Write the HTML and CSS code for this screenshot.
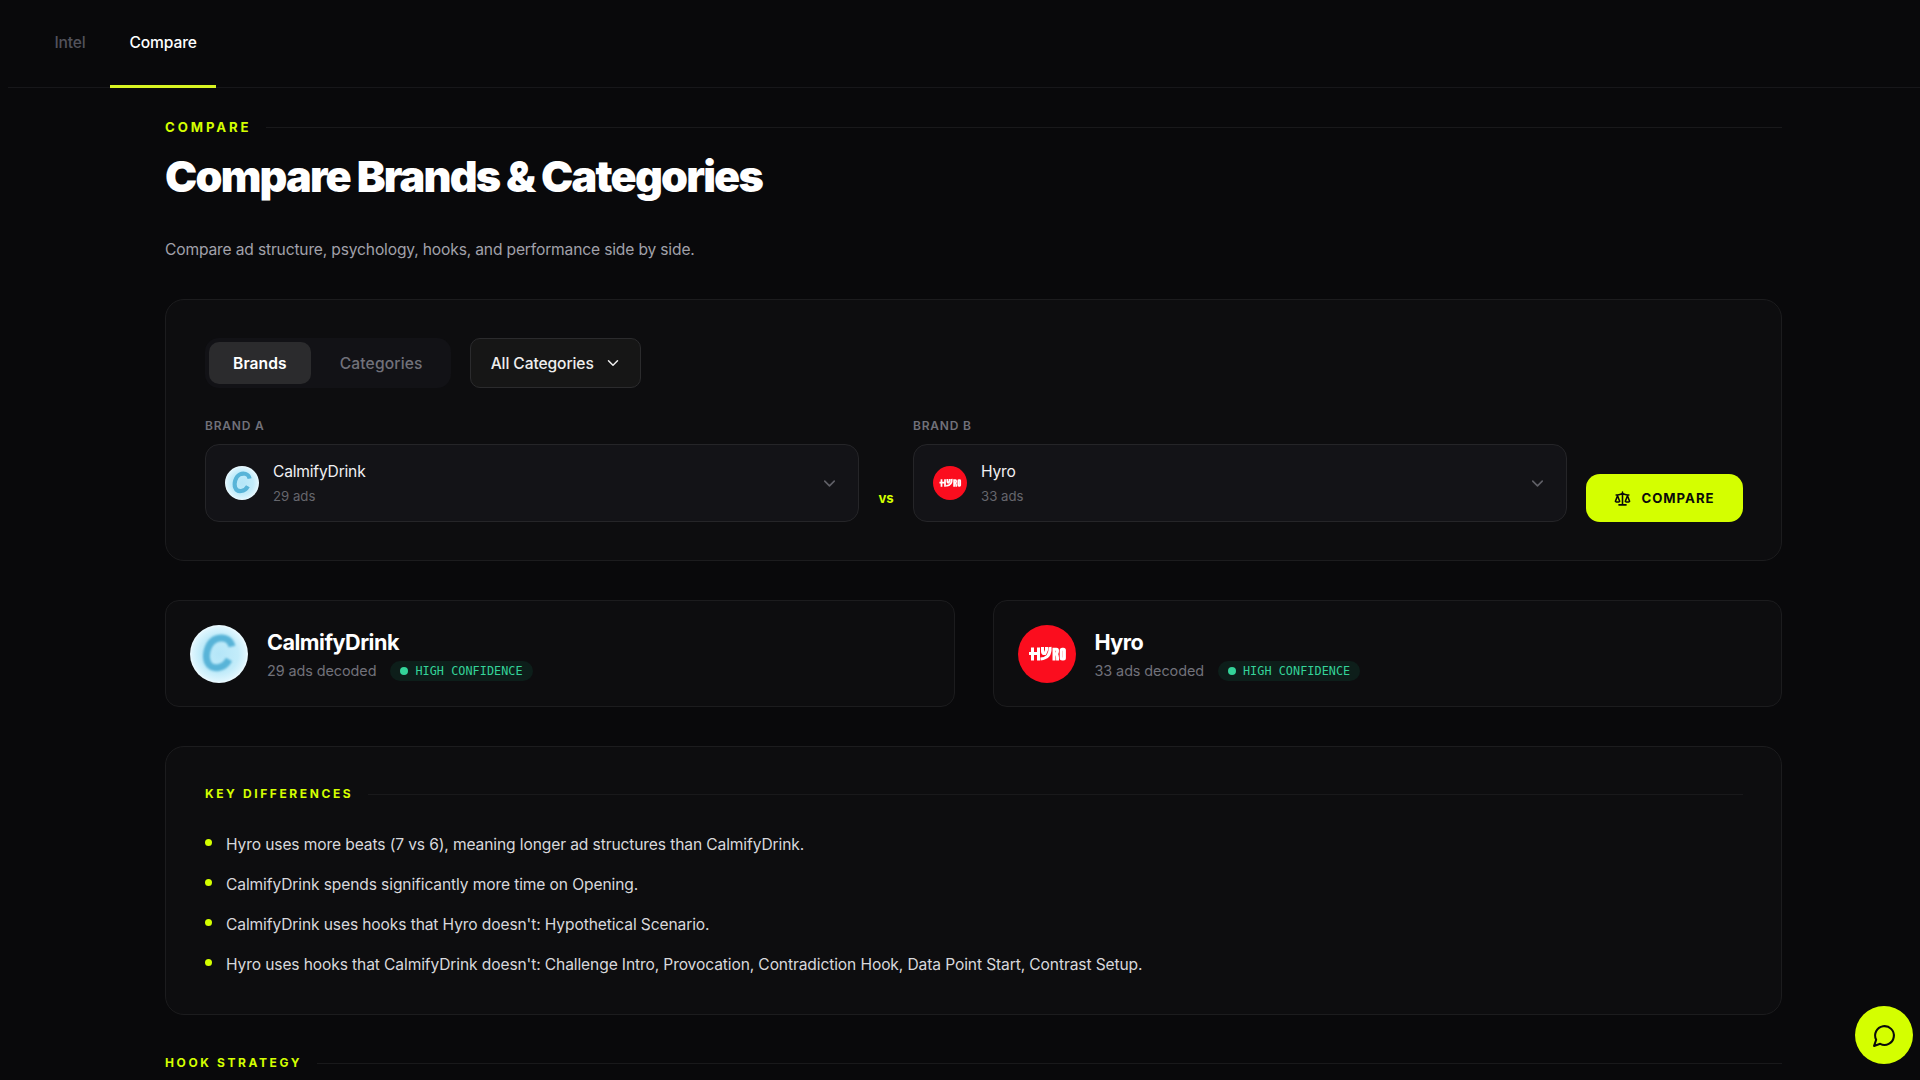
FILE: index.html
```html
<!DOCTYPE html>
<html lang="en">

<head>
    <meta charset="UTF-8">
    <meta name="viewport" content="width=device-width, initial-scale=1.0">
    <title>Compare Brands &amp; Categories</title>
    <link rel="stylesheet" href="styles.css">
</head>

<body>
    <!-- shared logos and icons -->
    <svg class="defs" width="0" height="0">
        <defs>
            <radialGradient id="calm-bg">
                <stop offset="0" stop-color="#b4e6f8" />
                <stop offset="0.7" stop-color="#c3ecfa" />
                <stop offset="1" stop-color="#e0f6fe" />
            </radialGradient>
            <filter id="soft" x="-20%" y="-20%" width="140%" height="140%">
                <feGaussianBlur stdDeviation="1" />
            </filter>
        </defs>
        <symbol id="calm" viewBox="0 0 58 58">
            <circle cx="29" cy="29" r="29" fill="#e9f9ff" />
            <circle cx="29" cy="29" r="27.5" fill="url(#calm-bg)" />
            <path d="M42 21.5C40 12.500 31 11.500 25 14.5C18 18 14.500 30 17.500 37C21 46 34 44 39 34.500" fill="none" stroke="#58b4d8" stroke-width="7" filter="url(#soft)" />
        </symbol>
        <symbol id="hyro" viewBox="0 0 58 58">
            <circle cx="29" cy="29" r="29" fill="#fb0d1e" />
            <g fill="none" stroke="#fff" stroke-width="3">
                <path d="M14.5 22.5V35.5M20.5 22.5V35.5M11 28.5H20" />
                <path d="M24.5 22V26.5Q24.5 29 27 28.5L28.5 25V22M32 22Q33 33 22.5 34" />
                <path d="M36 35.5V24.2H38.5Q39.5 24.2 39.5 26T38.5 29H36M38.5 29Q39.6 30 39.6 35.5" />
                <rect x="43.2" y="24.2" width="3.2" height="9.8" rx="1" />
            </g>
        </symbol>
        <symbol id="chevron" viewBox="0 0 24 24">
            <path d="m6 9 6 6 6-6" fill="none" stroke="currentColor" stroke-width="2" stroke-linecap="round" stroke-linejoin="round" />
        </symbol>
    </svg>

    <nav class="tabs">
        <a class="tab" href="#">Intel</a>
        <a class="tab active" href="#">Compare</a>
    </nav>

    <main>
        <div class="eyebrow">Compare</div>
        <h1>Compare Brands &amp; Categories</h1>
        <p class="subtitle">Compare ad structure, psychology, hooks, and performance side by side.</p>

        <section class="card picker">
            <div class="filters">
                <div class="toggle">
                    <button class="on">Brands</button>
                    <button>Categories</button>
                </div>
                <button class="category">All Categories <svg><use href="#chevron" /></svg></button>
            </div>
            <div class="row">
                <div class="field">
                    <label>Brand A</label>
                    <div class="select">
                        <svg class="avatar"><use href="#calm" /></svg>
                        <div>
                            <div class="name">CalmifyDrink</div>
                            <div class="count">29 ads</div>
                        </div>
                        <svg class="arrow"><use href="#chevron" /></svg>
                    </div>
                </div>
                <span class="vs">vs</span>
                <div class="field">
                    <label>Brand B</label>
                    <div class="select">
                        <svg class="avatar"><use href="#hyro" /></svg>
                        <div>
                            <div class="name">Hyro</div>
                            <div class="count">33 ads</div>
                        </div>
                        <svg class="arrow"><use href="#chevron" /></svg>
                    </div>
                </div>
                <button class="compare">
                    <svg viewBox="0 0 24 24" fill="none" stroke="currentColor" stroke-width="2.2" stroke-linecap="round" stroke-linejoin="round">
                        <path d="m16 16 3-8 3 8c-.87.65-1.92 1-3 1s-2.13-.35-3-1Z" />
                        <path d="m2 16 3-8 3 8c-.87.65-1.92 1-3 1s-2.13-.35-3-1Z" />
                        <path d="M7 21h10M12 3v18M3 7h2c2 0 5-1 7-2 2 1 5 2 7 2h2" />
                    </svg>
                    Compare
                </button>
            </div>
        </section>

        <div class="brands">
            <div class="brand">
                <svg class="logo"><use href="#calm" /></svg>
                <div>
                    <h2>CalmifyDrink</h2>
                    <div class="meta">29 ads decoded <span class="badge">HIGH CONFIDENCE</span></div>
                </div>
            </div>
            <div class="brand">
                <svg class="logo"><use href="#hyro" /></svg>
                <div>
                    <h2>Hyro</h2>
                    <div class="meta">33 ads decoded <span class="badge">HIGH CONFIDENCE</span></div>
                </div>
            </div>
        </div>

        <section class="card differences">
            <div class="eyebrow small">Key Differences</div>
            <ul>
                <li>Hyro uses more beats (7 vs 6), meaning longer ad structures than CalmifyDrink.</li>
                <li>CalmifyDrink spends significantly more time on Opening.</li>
                <li>CalmifyDrink uses hooks that Hyro doesn't: Hypothetical Scenario.</li>
                <li>Hyro uses hooks that CalmifyDrink doesn't: Challenge Intro, Provocation, Contradiction Hook, Data Point Start, Contrast Setup.</li>
            </ul>
        </section>

        <div class="eyebrow small">Hook Strategy</div>
    </main>

    <button class="chat">
        <svg viewBox="0 0 24 24" fill="none" stroke="currentColor" stroke-width="2" stroke-linecap="round" stroke-linejoin="round">
            <path d="M7.9 20A9 9 0 1 0 4 16.1L2 22Z" />
        </svg>
    </button>
</body>

</html>
```
FILE: styles.css
```css
* {
    box-sizing: border-box;
}

body {
    margin: 0;
    height: 1080px;
    overflow: hidden;
    background-color: #09090b;
    color: #fff;
    font-family: Inter, "Liberation Sans", sans-serif;
    font-size: 15.6px;
    letter-spacing: -0.12px;
}

button {
    border: none;
    background: none;
    color: inherit;
    font: inherit;
    padding: 0;
    cursor: pointer;
}

.defs {
    position: absolute;
}

/* top navigation */
.tabs {
    display: flex;
    gap: 5px;
    height: 88px;
    margin-left: 8px;
    padding-left: 27px;
    border-bottom: 1px solid #17171a;
}

.tab {
    height: 88px;
    padding: 0 19.4px;
    line-height: 85px;
    color: #52525b;
    font-weight: 500;
    text-decoration: none;
    border-bottom: 3px solid transparent;
}

.tab.active {
    color: #fff;
    border-bottom-color: #d9f522;
}

main {
    width: 1617px;
    margin-left: 165px;
    padding-top: 29px;
}

.eyebrow {
    display: flex;
    align-items: center;
    gap: 15px;
    line-height: 20px;
    font-size: 13.2px;
    font-weight: 700;
    letter-spacing: 2.9px;
    text-transform: uppercase;
    color: #d4ff00;
}

.eyebrow::after {
    content: "";
    flex: 1;
    height: 1px;
    background-color: #19191b;
}

.eyebrow.small {
    font-size: 12px;
    letter-spacing: 2.6px;
}

h1 {
    margin: 13px 0 35px;
    font-size: 43.2px;
    line-height: 52px;
    font-weight: 900;
    letter-spacing: -1.82px;
}

.subtitle {
    margin: 0 0 36px;
    line-height: 26px;
    letter-spacing: -0.16px;
    color: #a1a1aa;
}

.card {
    background-color: #0d0d0f;
    border: 1px solid #1c1c1e;
    border-radius: 19px;
    padding: 38px 38px 38px 39px;
}

.picker {
    height: 262px;
}

/* filters */
.filters {
    display: flex;
    gap: 19px;
}

.toggle {
    display: flex;
    gap: 5px;
    padding: 4px;
    height: 50px;
    border-radius: 14px;
    background-color: #121216;
}

.toggle button {
    padding: 0 24px;
    border-radius: 10px;
    font-weight: 500;
    letter-spacing: 0.15px;
    color: #71717a;
}

.toggle .on {
    background-color: #2b2b2d;
    color: #fff;
    font-weight: 600;
    letter-spacing: 0.1px;
}

.category {
    display: flex;
    align-items: center;
    gap: 10px;
    width: 171px;
    height: 50px;
    padding: 0 20px;
    border: 1px solid #2b2b2d;
    border-radius: 10px;
    background-color: #161616;
    color: #eee;
    font-weight: 500;
    letter-spacing: -0.1px;
    white-space: nowrap;
}

.category svg {
    width: 18px;
    height: 18px;
    flex: none;
}

/* brand pickers */
.row {
    display: flex;
    align-items: flex-end;
    gap: 19px;
    margin-top: 28px;
}

.field {
    flex: 1;
}

.field label {
    display: block;
    line-height: 20px;
    margin-bottom: 8px;
    font-size: 12px;
    font-weight: 600;
    letter-spacing: 0.8px;
    text-transform: uppercase;
    color: #71717a;
}

.select {
    display: flex;
    align-items: center;
    gap: 14px;
    height: 78px;
    padding: 0 19px;
    border: 1px solid #252528;
    border-radius: 14px;
    background-color: #131317;
}

.avatar {
    width: 34px;
    height: 34px;
}

.name {
    padding-top: 1px;
    line-height: 24px;
    letter-spacing: -0.2px;
    color: #f0f0f2;
}

.count {
    line-height: 24px;
    font-size: 13.2px;
    letter-spacing: 0;
    color: #66666d;
}

.arrow {
    width: 19px;
    height: 19px;
    margin-left: auto;
    color: #606067;
}

.vs {
    width: 16px;
    line-height: 48px;
    font-size: 13.2px;
    font-weight: 700;
    text-align: center;
    color: #d4ff00;
}

.compare {
    display: flex;
    align-items: center;
    justify-content: center;
    gap: 10px;
    width: 157px;
    height: 48px;
    border-radius: 14px;
    background-color: #d4ff00;
    color: #0a0a0a;
    font-size: 13.2px;
    font-weight: 700;
    letter-spacing: 1px;
    text-transform: uppercase;
}

.compare svg {
    width: 17px;
    height: 17px;
}

/* brand summary */
.brands {
    display: grid;
    grid-template-columns: 1fr 1fr;
    gap: 38px;
    margin: 39px 0;
}

.brand {
    display: flex;
    align-items: center;
    gap: 19px;
    height: 107px;
    padding: 0 24px;
    background-color: #0d0d0f;
    border: 1px solid #1c1c1e;
    border-radius: 14px;
}

.logo {
    width: 58px;
    height: 58px;
}

h2 {
    margin: 3px 0 0;
    font-size: 21.6px;
    line-height: 32px;
    font-weight: 700;
    letter-spacing: -0.5px;
}

.meta {
    display: flex;
    align-items: center;
    gap: 14px;
    line-height: 26px;
    font-size: 14.4px;
    letter-spacing: -0.07px;
    color: #71717a;
}

.badge {
    display: flex;
    align-items: center;
    gap: 7px;
    height: 20px;
    padding: 0 10px;
    border-radius: 10px;
    background-color: #0d1e1a;
    color: #34d399;
    font-family: "DejaVu Sans Mono", monospace;
    font-size: 11.8px;
    letter-spacing: 0.05px;
}

.badge::before {
    content: "";
    width: 8px;
    height: 8px;
    border-radius: 50%;
    background-color: #34d399;
}

.differences {
    height: 269px;
    margin-bottom: 38px;
    padding-top: 37px;
}

ul {
    list-style: none;
    margin: 28.4px 0 0;
    padding: 0;
}

li {
    display: flex;
    gap: 14px;
    margin-bottom: 13.8px;
    line-height: 26px;
    color: #d8d8dc;
}

li::before {
    content: "";
    width: 7px;
    height: 7px;
    margin-top: 7px;
    border-radius: 50%;
    background-color: #d4ff00;
}

.chat {
    position: fixed;
    right: 7px;
    bottom: 16px;
    display: flex;
    align-items: center;
    justify-content: center;
    width: 58px;
    height: 58px;
    border-radius: 50%;
    background-color: #d4ff00;
    color: #0a0a0a;
}

.chat svg {
    width: 25px;
    height: 25px;
}
```
